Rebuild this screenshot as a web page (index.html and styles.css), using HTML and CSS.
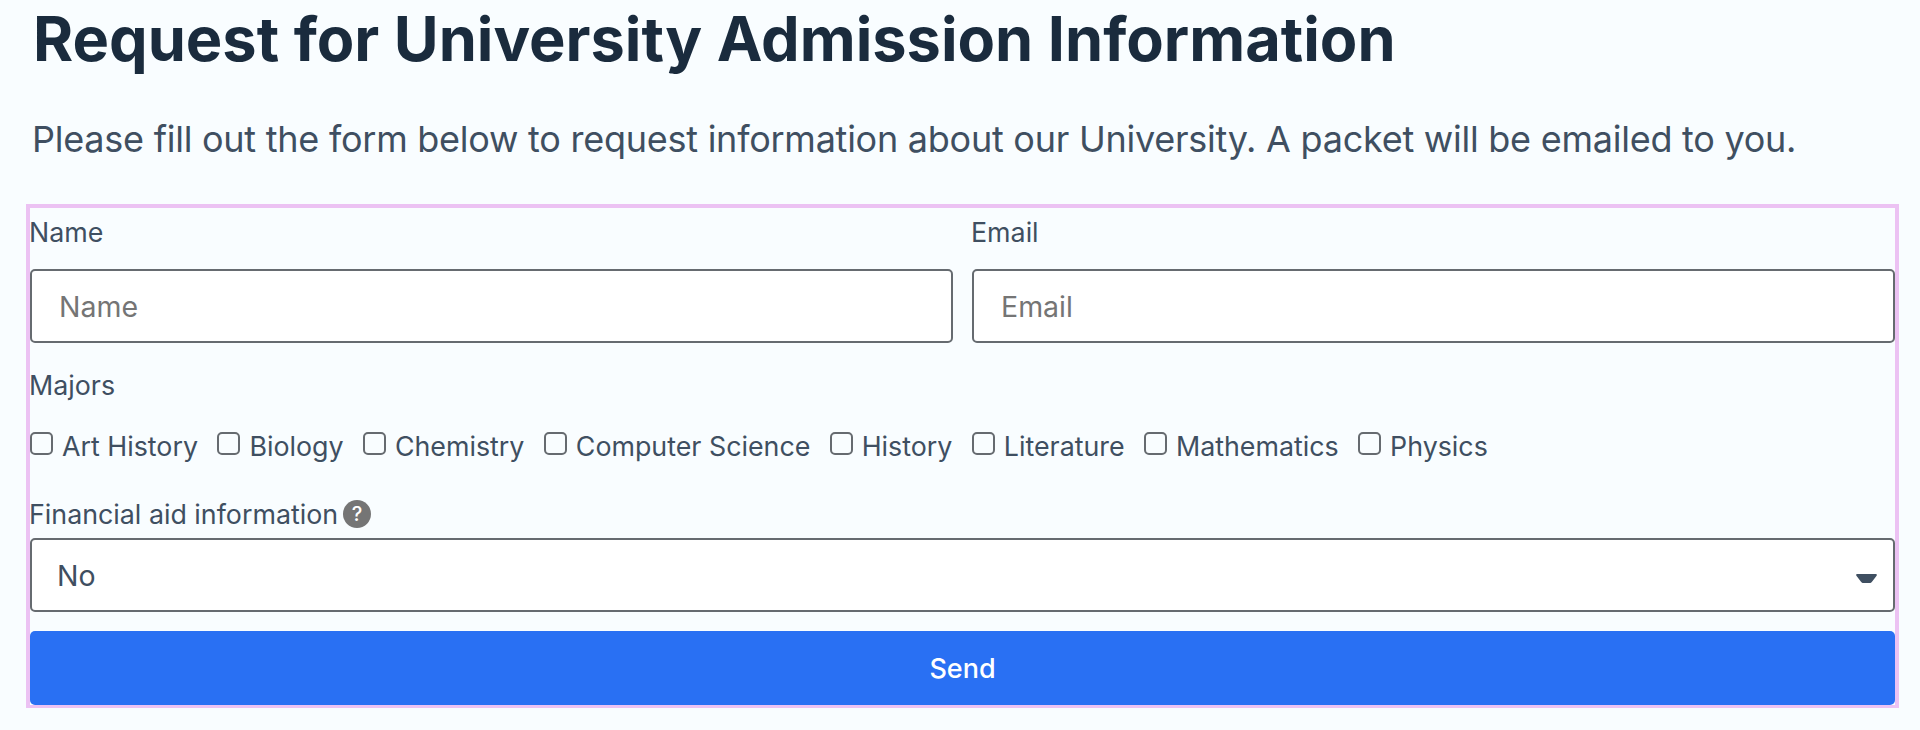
FILE: index.html
```html
<!DOCTYPE html>
<html lang="en">
<head>
  <meta charset="UTF-8"/>
  <title>Request for University Admission Information</title>
  <link rel="stylesheet" href="styles.css">
</head>
<body>
  <div class="page">
    <div class="intro">
      <h1 class="main-title">Request for University Admission Information</h1>
      <p class="sub-title">Please fill out the form below to request information about our University. A packet will be emailed to you.</p>
    </div>
    <form class="request-form">
      <div class="two-cols">
        <div class="field">
          <label class="lbl" for="name">Name</label>
          <input class="text-input" id="name" type="text" placeholder="Name"/>
        </div>
        <div class="field">
          <label class="lbl" for="email">Email</label>
          <input class="text-input" id="email" type="email" placeholder="Email"/>
        </div>
      </div>
      <div class="majors">
        <div class="lbl">Majors</div>
        <div class="check-row">
          <label class="check"><input type="checkbox"/><span>Art History</span></label>
          <label class="check"><input type="checkbox"/><span>Biology</span></label>
          <label class="check"><input type="checkbox"/><span>Chemistry</span></label>
          <label class="check"><input type="checkbox"/><span>Computer Science</span></label>
          <label class="check"><input type="checkbox"/><span>History</span></label>
          <label class="check"><input type="checkbox"/><span>Literature</span></label>
          <label class="check"><input type="checkbox"/><span>Mathematics</span></label>
          <label class="check"><input type="checkbox"/><span>Physics</span></label>
        </div>
      </div>
      <div class="aid">
        <label class="lbl aid-label" for="aid">Financial aid information<span class="help">?</span></label>
        <div class="select-wrap">
          <select class="select" id="aid">
            <option>No</option>
            <option>Yes</option>
          </select>
          <svg class="arrow" viewBox="0 0 21 9"><path d="M1.2 0h18.6c.9 0 1.4 1 .8 1.7l-4.6 6c-.6.8-1.4 1.3-2.4 1.3H7.4c-1 0-1.8-.5-2.4-1.3l-4.6-6C-.2 1 .3 0 1.2 0z"/></svg>
        </div>
      </div>
      <button class="send-btn" type="button">Send</button>
    </form>
  </div>
</body>
</html>
```

FILE: styles.css
```css
* { box-sizing:border-box; }
html, body { height:100%; }
body { margin:0; font-family:Inter,"Liberation Sans",sans-serif; background:#f9fdff; color:#3f4f61; overflow:hidden; }
.page { padding:0 21px 0 26px; }
.intro { padding-left:6px; }
.main-title { margin:0 0 0 1px; padding-top:4px; font-size:61.3px; line-height:70px; font-weight:700; color:#1a2b3d; }
.sub-title { margin:41px 0 0; font-size:36px; line-height:48px; letter-spacing:-.25px; color:#3f4f61; }
.request-form {
  margin-top:41px; border:4px solid #ecc2f3; border-bottom-width:3px;
  display:flex; flex-direction:column;
}
.two-cols { display:grid; grid-template-columns:1fr 1fr; gap:19px; }
.field { display:flex; flex-direction:column; }
.lbl { display:block; margin-left:-1px; font-size:26.8px; line-height:36px; color:#3f4f61; }
.text-input, .select {
  display:block; width:100%; height:74px; border:2px solid #666b70; border-radius:5px; background:#fff;
  font-family:inherit; font-size:28.5px; color:#3f4f61; outline:none;
}
.field .lbl { margin-top:6px; margin-bottom:19px; }
.text-input { padding:0 27px; }
.text-input::placeholder { color:#757575; opacity:1; }
.majors { margin-top:24px; }
.check-row { display:flex; gap:19.4px; margin-top:29px; }
.check { display:flex; align-items:flex-start; gap:9px; font-size:26.8px; line-height:28px; }
.check input {
  appearance:none; width:23px; height:23px; margin:0; background:#fff0;
  border:2px solid #666b70; border-radius:5px;
}
.aid { margin-top:36px; }
.aid-label { display:flex; align-items:center; gap:5px; }
.help {
  width:28px; height:28px; border-radius:50%; background:#757575; color:#fff;
  font-size:20px; font-weight:500; line-height:28px; text-align:center;
}
.select-wrap { position:relative; margin-top:6px; }
.select { appearance:none; padding:0 25px; }
.arrow { position:absolute; right:18px; top:36px; width:21px; height:9px; fill:#3f4f61; pointer-events:none; }
.send-btn {
  display:block; width:100%; height:74px; margin-top:19px; border:none; border-radius:5px;
  background:#2970f3; color:#fff; font-family:inherit; font-size:27px; font-weight:500;
}
```
